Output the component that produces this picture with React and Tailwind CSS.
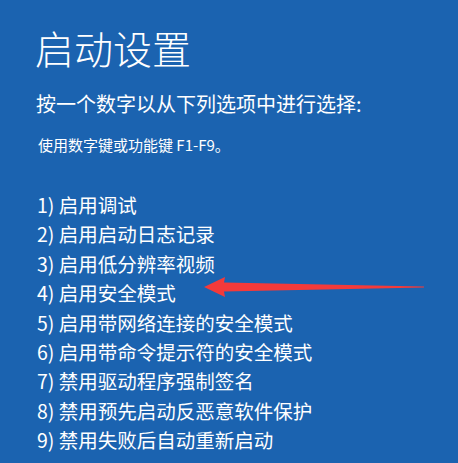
import React from 'react';

const options = [
  '1) 启用调试',
  '2) 启用启动日志记录',
  '3) 启用低分辨率视频',
  '4) 启用安全模式',
  '5) 启用带网络连接的安全模式',
  '6) 启用带命令提示符的安全模式',
  '7) 禁用驱动程序强制签名',
  '8) 禁用预先启动反恶意软件保护',
  '9) 禁用失败后自动重新启动',
];

function PointerArrow() {
  return (
    <svg className="absolute left-[200px] top-[274px]" width="228" height="26" viewBox="0 0 228 26">
      <path d="M4 13 L25 3 L24 8.5 L224 12.4 L224 13.6 L24 17.5 L25 23 Z" fill="#f43a3a" />
    </svg>
  );
}

export default function App() {
  return (
    <div
      className="relative w-[458px] h-[463px] overflow-hidden bg-[#1b63b0] text-white"
      style={{ fontFamily: '"Noto Sans CJK SC", "Noto Sans", sans-serif' }}
    >
      <div className="pl-[35px] pt-[21px]">
        <h1 className="text-[39px] leading-[52px] font-light">启动设置</h1>
        <p className="mt-[17px] pl-[1px] text-[20px] leading-[28px]">按一个数字以从下列选项中进行选择:</p>
        <p className="mt-[17px] pl-[3px] text-[15px] leading-[20px]">使用数字键或功能键 F1-F9。</p>
        <ul className="mt-[35px] pl-[2px] flex flex-col">
          {options.map((o) => (
            <li key={o} className="text-[19.5px] leading-[29.4px]">{o}</li>
          ))}
        </ul>
      </div>
      <PointerArrow />
    </div>
  );
}
